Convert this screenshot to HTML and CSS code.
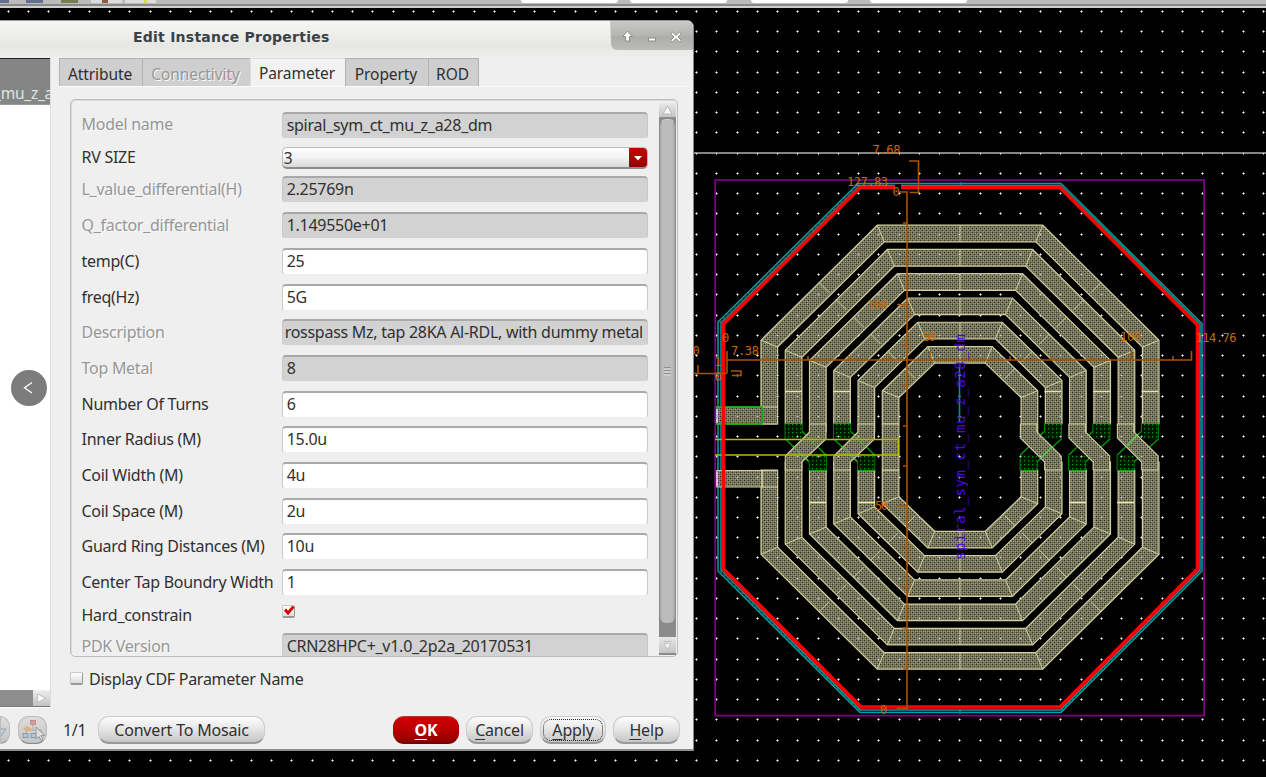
FILE: index.html
```html
<!DOCTYPE html>
<html lang="en">
<head>
<meta charset="utf-8">
<title>Edit Instance Properties</title>
<link rel="stylesheet" href="styles.css">
</head>
<body>
<div class="desktop">
<svg class="canvas" width="1266" height="777" viewBox="0 0 1266 777">
  <defs>
    <pattern id="metal" width="4" height="4" patternUnits="userSpaceOnUse">
      <rect width="4" height="4" fill="#6e6e56"/>
      <path d="M0 0h1v1h-1zM2 2h1v1h-1z" fill="#33332a"/>
      <path d="M1 1h1v1h-1zM3 1h1v1h-1zM1 3h1v1h-1zM3 3h1v1h-1z" fill="#9d9d7e"/>
    </pattern>
    <pattern id="via" width="4" height="4" patternUnits="userSpaceOnUse">
      <rect width="4" height="4" fill="#001400"/>
      <rect width="1.4" height="1.4" fill="#009000"/>
    </pattern>
  </defs>
  <g id="dots"></g>
  <path d="M694 153H1266" stroke="#858585" stroke-width="2"/>
  <g id="guard"></g>
  <g id="coil"></g>
  <g id="cross"></g>
  <g id="dots-over" opacity=".75"></g>
  <g fill="none" stroke="#008f92" stroke-width="1.6">
    <path d="M959.5 362v60M960.500 182v5M960 709v5"/>
  </g>
  <rect x="715.2" y="180" width="489" height="535.6" fill="none" stroke="#850088" stroke-width="1.7"/>
  <path d="M715 439.500H898.500V455H715" fill="none" stroke="#b9b900" stroke-width="1.5"/>
  <path d="M723.500 324L860 187.500H1060L1197.500 325V569L1060 707H861L723.500 569Z" fill="none" stroke="#f00" stroke-width="3.6"/>
  <rect x="895" y="184" width="6" height="8"/>
  <g fill="none" stroke="#a85400" stroke-width="1.6">
    <path d="M909 161h9.500v31.500h-9M899 192h8v516.500h-10"/>
    <path d="M903 223h4M903 263h4M897 304.500h10M903 345h4M903 385h4M903 426h4M903 466h4M897 506h10M903 547h4M903 587h4M903 628h4M903 669h4"/>
    <path d="M726.500 360H1191.500V351M767 360v-4M808 360v-4M848.500 360v-4M889 360v-4M930 360v-9M970 360v-4M1010 360v-4M1051 360v-4M1091 360v-4M1131.500 360v-9M1173 360v-4M727 351v22.500M694 373.500h33M698 365v8M731 371h10v4.500h-9"/>
  </g>
  <g class="ruler-text">
    <text x="872.500" y="154" textLength="28">7.68</text>
    <text x="847" y="185.500" textLength="41">127.83</text>
    <text x="892.500" y="196">0</text>
    <text x="867" y="309" textLength="21">100</text>
    <text x="875" y="510" textLength="13">50</text>
    <text x="880" y="713.500">0</text>
    <text x="923" y="341" textLength="13">50</text>
    <text x="1120" y="341" textLength="21">100</text>
    <text x="1195.500" y="341.500" textLength="41">114.76</text>
    <text x="722" y="341.500">0</text>
    <text x="731" y="355" textLength="28">7.38</text>
    <text x="714.500" y="365.500">1</text>
    <text x="714.500" y="380.500">0</text>
    <text x="692.500" y="354.500">0</text>
  </g>
  <text class="cell-name" transform="translate(965 560) rotate(-90)" textLength="226">spiral_sym_ct_mu_z_a28_dm</text>
</svg>

<div class="toolbar">
  <i class="tool t1"></i><i class="tool t2"></i><i class="tool t3"></i><i class="tool t4"></i><i class="tool t5"></i>
  <i class="entry e1"></i><i class="entry e2"></i><i class="entry e3"></i><i class="entry e4"></i>
</div>

<section class="dialog">
  <header class="titlebar">
    <h1 class="title">Edit Instance Properties</h1>
    <svg class="winctl" width="83" height="29" viewBox="0 0 83 29">
      <defs><linearGradient id="wg" x2="0" y2="1"><stop offset="0" stop-color="#c9c9c8"/><stop offset=".5" stop-color="#b4b4b3"/><stop offset=".55" stop-color="#acacab"/><stop offset="1" stop-color="#bcbcbb"/></linearGradient></defs>
      <path d="M0 0H77Q83 0 83 6V29H7Q1 29 1 21Z" fill="url(#wg)"/>
      <g stroke="#8d8d8d" fill="#fbfbfb" stroke-width="1"><path d="M17.500 10l5 5.500h-3v4.500h-4v-4.500h-3z"/><rect x="38.500" y="17" width="7" height="3"/><path d="M60.500 12.500l2-1.500 3.500 3.500 3.500-3.500 2 1.500-3.500 3.500 3.500 3.500-2 1.500-3.500-3.500-3.500 3.500-2-1.500 3.500-3.500z"/></g>
    </svg>
  </header>
  <div class="body">
    <aside class="list">
      <div class="list-item"><span>_mu_z_a</span></div>
      <div class="list-space"></div>
      <div class="hscroll"><span class="hthumb"></span><svg width="17" height="17" viewBox="0 0 17 17"><path d="M4.500 4l8 4-8 4.500z" fill="#f8f8f8" stroke="#b5b5b5" stroke-width=".7"/></svg></div>
    </aside>
    <div class="main">
      <nav class="tabs">
        <span class="tab a">Attribute</span><span class="tab c off">Connectivity</span><span class="tab p active">Parameter</span><span class="tab r">Property</span><span class="tab o">ROD</span>
      </nav>
      <div class="frame">
        <div class="form">
          <div class="row first"><label class="off">Model name</label><div class="field ro">spiral_sym_ct_mu_z_a28_dm</div></div>
          <div class="row combo-row"><label>RV SIZE</label><div class="combo"><span>3</span><b><svg width="18" height="20" viewBox="0 0 18 20"><path d="M5 8h8l-4 4.500z" fill="#fff"/></svg></b></div></div>
          <div class="row"><label class="off">L_value_differential(H)</label><div class="field ro">2.25769n</div></div>
          <div class="row"><label class="off">Q_factor_differential</label><div class="field ro">1.149550e+01</div></div>
          <div class="row"><label>temp(C)</label><div class="field">25</div></div>
          <div class="row"><label>freq(Hz)</label><div class="field">5G</div></div>
          <div class="row"><label class="off">Description</label><div class="field ro desc">rosspass Mz, tap 28KA Al-RDL, with dummy metal</div></div>
          <div class="row"><label class="off">Top Metal</label><div class="field ro">8</div></div>
          <div class="row"><label>Number Of Turns</label><div class="field">6</div></div>
          <div class="row"><label>Inner Radius (M)</label><div class="field">15.0u</div></div>
          <div class="row"><label>Coil Width (M)</label><div class="field">4u</div></div>
          <div class="row"><label>Coil Space (M)</label><div class="field">2u</div></div>
          <div class="row"><label>Guard Ring Distances (M)</label><div class="field">10u</div></div>
          <div class="row"><label>Center Tap Boundry Width</label><div class="field">1</div></div>
          <div class="row check-row"><label>Hard_constrain</label><span class="check"><svg width="14" height="14" viewBox="0 0 14 14"><path d="M3 5.500l3 3.500 5.500-6.500" fill="none" stroke="#d40000" stroke-width="2.800"/></svg></span></div>
          <div class="row"><label class="off">PDK Version</label><div class="field ro">CRN28HPC+_v1.0_2p2a_20170531</div></div>
        </div>
        <div class="vscroll">
          <svg width="17" height="14" viewBox="0 0 17 14"><path d="M8.500 3l4.500 8h-9z" fill="#f5f5f5" stroke="#aaa" stroke-width=".7"/></svg>
          <div class="trough"><div class="vthumb"><i></i></div></div>
          <svg class="down" width="17" height="18" viewBox="0 0 17 18"><path d="M4 5h9M4.500 7.500h8l-4 6z" fill="#f5f5f5" stroke="#b5b5b5" stroke-width=".8"/></svg>
        </div>
      </div>
      <div class="cdf"><span class="check"></span>Display CDF Parameter Name</div>
    </div>
  </div>
  <footer class="actions">
    <span class="round left"><svg width="27" height="27" viewBox="0 0 27 27"><path d="M9 12h11l-6 8z" fill="#c3d2df" stroke="#8fa3b5"/></svg></span>
    <span class="round"><svg width="29" height="27" viewBox="0 0 29 27"><g fill="none" stroke="#aaa"><path d="M14 7v6M7 17v-4h15v4"/></g><rect x="11.500" y="3.500" width="5" height="4" fill="#d89a9a" stroke="#c57d7d" stroke-width=".7"/><path d="M8 9l5 3-5 3-4-3z" fill="#dfb080"/><g fill="#b4c4d2" stroke="#7c93aa" stroke-width=".8"><rect x="4" y="16.500" width="5" height="4"/><rect x="12" y="16.500" width="5" height="4"/></g><path d="M17 10v12l3-2.500 2 4 2-1-2-4h4z" fill="#ddd" stroke="#999"/></svg></span>
    <span class="count">1/1</span>
    <button class="btn mosaic">Convert To Mosaic</button>
    <button class="btn ok"><u>O</u>K</button>
    <button class="btn cancel"><u>C</u>ancel</button>
    <button class="btn apply"><u>A</u>pply</button>
    <button class="btn help"><u>H</u>elp</button>
  </footer>
</section>
<div class="prev"><svg width="36" height="36" viewBox="0 0 36 36"><path d="M21 12.500l-7.500 5.200 7.500 5.300" fill="none" stroke="#fff" stroke-width="1.300"/></svg></div>
</div>
<script src="layout.js"></script>
</body>
</html>
```

FILE: styles.css
```css
* { box-sizing: border-box; }
body { margin: 0; background: #000; overflow: hidden; font-family: "Noto Sans", "Open Sans", sans-serif; font-size: 16px; color: #303030; }
.desktop { position: relative; width: 1266px; height: 777px; background: #000; overflow: hidden; }
.canvas { position: absolute; left: 0; top: 0; }
.ruler-text { font: 12px "DejaVu Sans Mono", monospace; fill: #cc6800; }
.cell-name { font: 14px "DejaVu Sans Mono", monospace; fill: #5206e0; }

.toolbar { position: absolute; left: 0; top: 0; width: 1266px; height: 8px; background: #bbb; border-bottom: 2px solid #cfcfcf; box-shadow: inset 0 -2px #888; overflow: hidden; }
.toolbar i { position: absolute; top: 0; height: 3px; }
.tool { width: 19px; background: #66708c; }
.t1 { left: -10px; } .t2 { left: 26px; width: 17px; } .t3 { left: 61px; width: 17px; background: #74804f; }
.t4 { left: 91px; width: 31px; background: linear-gradient(90deg, #ddd 35%, #8b6040 35% 55%, #ddd 55%); }
.t5 { left: 125px; width: 31px; background: linear-gradient(90deg, #ddd 60%, #d9d94a 60% 72%, #ddd 72%); }
.entry { background: #fff; border-radius: 0 0 4px 4px; width: 97px; }
.e1 { left: 521px; } .e2 { left: 630px; } .e3 { left: 751px; } .e4 { left: 870px; }

.dialog { position: absolute; left: 0; top: 20px; width: 694px; height: 731px; display: flex; flex-direction: column; background: #efefef; border-top: 1px solid #999; border-right: 1px solid #888; border-bottom: 2px solid #8d8d8d; border-radius: 0 7px 0 0; overflow: hidden; }
.titlebar { display: flex; justify-content: space-between; height: 37px; background: linear-gradient(#f7f7f6, #e7e7e4 65%, #ebebe9 85%, #efefef); }
.title { margin: 7px 0 0 133px; font: bold 14px/18px "DejaVu Sans", sans-serif; letter-spacing: .24px; color: #3a4246; }
.winctl { display: block; }
.body { display: flex; height: 651px; }
.list { width: 51px; height: 650px; display: flex; flex-direction: column; background: #fff; border-right: 1px solid #ddd; overflow: hidden; }
.list-item { display: flex; justify-content: flex-end; height: 47px; padding: 23px 0 0; background: #858585; border-top: 1px solid #222; border-bottom: 1px solid #999; color: #dce6e4; font-size: 15.500px; letter-spacing: -.25px; line-height: 22px; white-space: nowrap; }
.list-item span { margin-right: -3px; }
.list-space { flex: 1; }
.hscroll { display: flex; height: 17px; margin-bottom: 1px; background: linear-gradient(#eee, #c2c2c2); border-bottom: 1px solid #777; }
.hthumb { width: 33px; background: #8e8e8e; }
.main { width: 627px; margin-left: 8px; }
.tabs { display: flex; height: 29px; border-bottom: 1px solid #fafafa; white-space: nowrap; }
.tab { height: 28px; padding-top: 3px; background: #cfcfcf; border: 1px solid #b3b3b3; border-bottom: 0; border-right: 0; line-height: 24px; text-align: center; font-size: 15.500px; letter-spacing: -.08px; padding-right: 2px; }
.tab.a { width: 83px; } .tab.c { width: 108px; } .tab.p { width: 95px; } .tab.r { width: 83px; }
.tab.o { width: 51px; border-right: 1px solid #b3b3b3; }
.tab.active { background: #f2f2f2; padding-top: 2px; border-color: #ddd; }
.off { color: #979797; text-shadow: 1px 1px #fafafa; }
.frame { display: flex; width: 608px; height: 558px; margin: 12px 0 0 11px; border: 1px solid #bdbdbd; border-radius: 5px; overflow: hidden; box-shadow: inset 1px 1px #d9d9d9; }
.form { width: 577px; padding: 12px 0 0 10.500px; }
.row { display: flex; height: 27px; margin-bottom: 8.700px; align-items: center; white-space: nowrap; }
.row label { width: 200.500px; font-size: 16px; line-height: 27px; letter-spacing: -.27px; }
.first { margin-bottom: 8.500px; }
.first label { margin-top: -1px; }
.combo-row { height: 21px; margin-bottom: 8px; }
.field { width: 367px; height: 27px; padding-left: 4px; overflow: hidden; background: #fff; border: 1px solid #c9c9c9; border-top: 2px solid #a9a9a9; border-bottom-color: #eee; border-radius: 4px; line-height: 22px; font-size: 16px; letter-spacing: -.27px; }
.ro { background: #d2d2d2; }
.desc { padding-left: 2px; }
.combo { display: flex; justify-content: space-between; width: 367px; height: 22px; padding-left: 1px; line-height: 20px; font-size: 15.500px; background: linear-gradient(#fff, #f3f3f3 50%, #d8d8d8); border: 1px solid #bbb; border-bottom: 2px solid #8d8d8d; border-radius: 5px; overflow: hidden; }
.combo b { width: 18px; height: 21px; background: linear-gradient(#c80000, #8e0000); }
.check { width: 13px; height: 13px; background: linear-gradient(#fff, #ddd); border: 1px solid #c8c8c8; border-bottom: 2px solid #999; border-right-color: #999; border-radius: 2px; }
.check svg { display: block; margin: -2px 0 0 -1px; }
.check-row { height: 28.400px; margin: 0; align-items: flex-start; }
.check-row label { line-height: 21px; }
.check-row .check { margin: 0; }
.vscroll { display: flex; flex-direction: column; width: 17px; margin: 3px 0 1px 11px; background: #d8d8d8; border-radius: 3px; }
.vscroll > svg { display: block; height: 14px; background: linear-gradient(#e8e8e8, #c5c5c5); }
.vscroll > svg.down { height: 18px; border-bottom: 2px solid #888; }
.trough { flex: 1; background: #8b8b8b; padding-top: 2px; }
.vthumb { display: grid; place-items: center; height: 505px; background: linear-gradient(90deg, #aaa, #bcbcbc 20% 80%, #a4a4a4); border: 1px solid #8a8a8a; border-top-color: #ccc; border-radius: 7px; }
.vthumb i { width: 7px; height: 9px; background: repeating-linear-gradient(#929292 0 1px, #ccc 1px 3px); }
.cdf { display: flex; align-items: center; gap: 6px; height: 24px; margin: 10px 0 0 11px; font-size: 16px; letter-spacing: -.27px; }
.cdf .check { margin-top: -1px; }
.actions { display: flex; height: 41px; align-items: flex-start; padding-top: 8px; }
.round { display: block; width: 29px; height: 28px; background: linear-gradient(#ddd, #c4c4c4); border: 1px solid #bbb; border-bottom-color: #888; border-radius: 11px; overflow: hidden; }
.round.left { width: 10px; margin-right: 8px; border-radius: 0 11px 11px 0; }
.round.left svg { margin-left: -15px; }
.count { width: 51px; padding-left: 16px; line-height: 29px; font-size: 16px; letter-spacing: -.3px; }
.btn { font: 16px/22px "Noto Sans", sans-serif; letter-spacing: -.18px; color: #303030; height: 28px; padding: 1px 0 0; border: 1px solid #ccc; border-bottom: 2px solid #999; border-radius: 11px; background: linear-gradient(#fdfdfd, #e7e7e7 45%, #c6c6c6); }
.btn u { text-decoration-thickness: 1px; text-underline-offset: 3px; }
.mosaic { width: 167px; }
.ok { width: 66px; margin-left: 128px; color: #fff; font-weight: bold; background: linear-gradient(#d20000, #ba0000 50%, #900000); border-color: #b33 #a00 #7a0000; }
.cancel { width: 67px; margin-left: 7px; }
.apply { width: 66px; margin-left: 7px; outline: 1px dotted #222; outline-offset: -4px; }
.help { width: 67px; margin-left: 7px; }
.prev { position: absolute; left: 11px; top: 370px; width: 36px; height: 36px; border-radius: 50%; background: #7c7c7c; }
.prev svg { display: block; }
```

FILE: layout.js
```js
const NS = 'http://www.w3.org/2000/svg';
function add(id, tag, attrs) {
  const el = document.createElementNS(NS, tag);
  for (const k in attrs) el.setAttribute(k, attrs[k]);
  document.getElementById(id).appendChild(el);
}

// Grid dots
const PITCH = 20.24;
let cores = '', arms = '';
for (let i = 0; i < 63; i++) {
  for (let j = 0; j < 38; j++) {
    const x = Math.round(8 + i * PITCH), y = Math.round(11 + j * PITCH);
    cores += `M${x} ${y}h1v1h-1z`;
    arms += `M${x - 1} ${y}h3v1h-3zM${x} ${y - 1}h1v3h-1z`;
  }
}
for (const id of ['dots', 'dots-over']) {
  add(id, 'path', { d: arms, fill: '#909090' });
  add(id, 'path', { d: cores, fill: '#fff' });
}

// Guard ring
const guards = [
  'M718 322L858 183.500H1061L1202 323.500V571L1061 712.500H860L718 571Z',
  'M721 323L859.500 185.500H1060.500L1200 324V570L1060.500 710H860.500L721 570Z'
];
guards.forEach(d => add('guard', 'path', { d, fill: 'none', stroke: '#00a0a2', 'stroke-width': 1.5 }));
add('guard', 'path', { d: 'M719.500 322.500L858.700 184.500M1061 184.500L1201 323.500M1201 570.500L1061 711M860 711L719.500 570.500', stroke: '#7d4444', 'stroke-width': 1, 'stroke-dasharray': '3 2' });

// Coil turns
const CX = 960, CY = 447.2, STEP = 24.26, W = 16.6;
function shape(k, inset) {
  const t = k + inset / STEP;
  return { w: 199 - STEP * t, h: 222 - STEP * t, cx: 82.7 - 10.1 * t, cy: 107 - 10.1 * t };
}
const EDGE = '#cfcf9f';
function poly(pts, fill, stroke) {
  add('coil', 'path', { d: 'M' + pts.map(p => p.join(' ')).join('L') + 'Z', fill, stroke: stroke || EDGE, 'stroke-width': 1.2 });
}
for (let k = 0; k < 6; k++) {
  const o = shape(k, 0), n = shape(k, W);
  for (const sy of [-1, 1]) {
    const ends = {};
    for (const sx of [-1, 1]) {
      let end;
      if (sx < 0) end = k === 0 ? (sy < 0 ? 424 : 470) : k === 5 ? (sy < 0 ? 424 : 470) : sy < 0 ? (k % 2 ? 424 : 432) : (k % 2 ? 462 : 470);
      else end = sy < 0 ? (k % 2 ? 432 : 424) : (k % 2 ? 470 : 462);
      ends[sx] = end;
    }
    const P = (s, sx) => [[CX + sx * s.cx, CY + sy * s.h], [CX + sx * s.w, CY + sy * s.cy], [CX + sx * s.w, ends[sx]]];
    poly([...P(o, -1).reverse(), ...P(o, 1), ...P(n, 1).reverse(), ...P(n, -1)], 'url(#metal)');
    let d = '';
    for (const sx of [-1, 1]) {
      const a = P(o, sx), b = P(n, sx);
      d += `M${a[0]}L${b[0]}M${a[1]}L${b[1]}`;
      const mx = (a[0][0] + a[1][0]) / 2, my = (a[0][1] + a[1][1]) / 2;
      d += `M${mx} ${my}l${-sx * 10} ${-sy * 10}`;
    }
    d += `M${CX} ${CY + sy * o.h}V${CY + sy * n.h}`;
    add('coil', 'path', { d, stroke: EDGE, 'stroke-width': 1, fill: 'none' });
  }
}

// Terminals, pads and crossings
function greenBand(l1, l2) {
  const d = l2 > l1
    ? `M${l1} 424h16.500V431L${l2 + 16.5} 455V470h-16.500V462L${l1} 439Z`
    : `M${l1} 424h16.500V439L${l2 + 16.5} 462V470h-16.500V455L${l1} 431Z`;
  add('cross', 'path', { d, fill: '#000', stroke: '#009c00', 'stroke-width': 1.4 });
  add('cross', 'rect', { x: l1, y: 424, width: 16.5, height: 15, fill: 'url(#via)' });
  add('cross', 'rect', { x: l2, y: 455, width: 16.5, height: 15, fill: 'url(#via)' });
}
function metalBand(l1, l2) {
  const d = l2 > l1
    ? `M${l1} 424V438L${l2} 462V470h16.500V456L${l1 + 16.5} 432V424Z`
    : `M${l1} 424V432L${l2} 456V470h16.500V462L${l1 + 16.5} 439V424Z`;
  add('cross', 'path', { d, fill: 'url(#metal)', stroke: EDGE, 'stroke-width': 1.1 });
}
[785.3, 833.8].forEach(x => {
  greenBand(x, x + 24.2);
  metalBand(x + 24.2, x);
  add('cross', 'path', { d: `M${x + 8} 446l15 15M${x + 22} 437l9 9`, stroke: '#3fc43a', 'stroke-width': 1.2, 'stroke-dasharray': '4 2' });
});
[1020.4, 1068.9, 1117.4].forEach(x => {
  greenBand(x + 24.3, x);
  metalBand(x, x + 24.3);
});
add('cross', 'path', { d: 'M882.300 424H898.900V470H882.300Z', fill: 'url(#metal)', stroke: EDGE, 'stroke-width': 1.1 });
add('cross', 'path', { d: 'M1052 447l-12 12M1138 434l-11 12', stroke: '#55d844', 'stroke-width': 1.4 });
add('cross', 'path', { d: 'M716 407H777.500V424H716Z', fill: 'url(#metal)', stroke: EDGE, 'stroke-width': 1 });
add('cross', 'path', { d: 'M716 470.500H777.500V487H716Z', fill: 'url(#metal)', stroke: EDGE, 'stroke-width': 1 });
add('cross', 'path', { d: 'M716 407H762V424H716Z', fill: 'none', stroke: '#00b400', 'stroke-width': 1.5 });
add('cross', 'path', { d: 'M762 470v17M785 391.500h17M833 391.500h17M1044.500 391.500h17M1093 391.500h17M1141.500 391.500h17M809 502.500h17M858 502.500h17M1069 502.500h17M1117 502.500h17', stroke: '#e5e5b2', 'stroke-width': 1.3 });
add('cross', 'path', { d: 'M717 409v14M717 472v14', stroke: '#e8b8f0', 'stroke-width': 2 });
```
